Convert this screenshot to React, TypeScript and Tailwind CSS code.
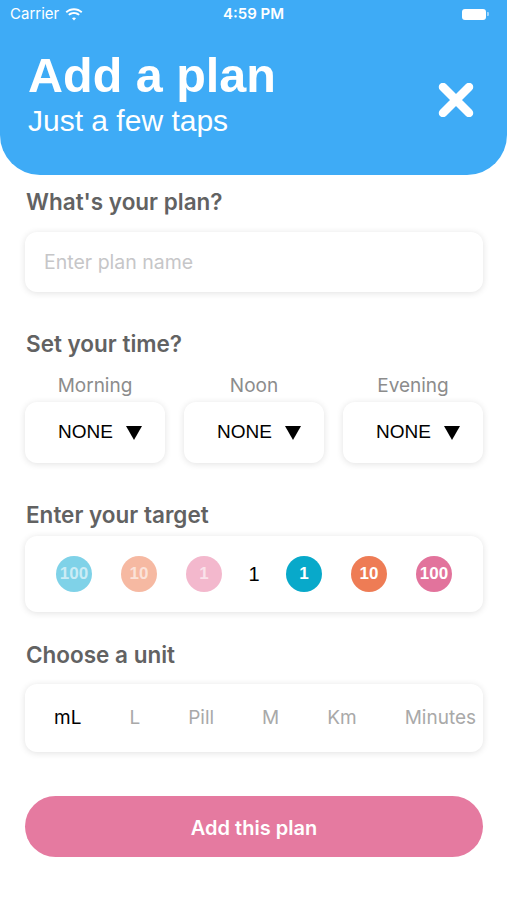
import React from "react";

const sf = { fontFamily: "Inter, 'Noto Sans', sans-serif" };
const hv = { fontFamily: "'Liberation Sans', Arial, sans-serif" };

function Wifi() {
  return (
    <svg width="18" height="13" viewBox="0 0 18 13" fill="white">
      <path d="M9 2.2c2.7 0 5.2 1 7.1 2.8l1.3-1.4C15.1 1.5 12.1.3 9 .3S2.9 1.5.6 3.6L1.9 5C3.8 3.2 6.3 2.2 9 2.2z" />
      <path d="M9 5.9c1.7 0 3.3.6 4.5 1.7l1.3-1.4C13.2 4.8 11.2 4 9 4S4.8 4.8 3.2 6.2l1.3 1.4C5.7 6.5 7.3 5.9 9 5.9z" />
      <path d="M9 9.4c.8 0 1.5.3 2 .8L9 12.4 7 10.2c.5-.5 1.2-.8 2-.8z" />
    </svg>
  );
}

function Circle({ n, bg }: { n: string; bg: string }) {
  return (
    <div
      className={`w-[36px] h-[36px] rounded-full flex items-center justify-center text-white font-bold text-[17px] ${bg}`}
      style={hv}
    >
      {n}
    </div>
  );
}

function Dropdown() {
  return (
    <div className="flex-1 h-[61px] bg-white rounded-[12px] shadow-[0_1px_7px_rgba(0,0,0,0.12)] flex items-center justify-center pl-[10px] gap-[13px]">
      <span className="text-[19px] text-black" style={hv}>NONE</span>
      <svg width="16" height="14" viewBox="0 0 16 14"><path d="M0 0H16L8 14Z" fill="black" /></svg>
    </div>
  );
}

export default function App() {
  const units = ["mL", "L", "Pill", "M", "Km", "Minutes"];
  return (
    <div className="w-[507px] h-[900px] bg-white relative overflow-hidden">
      <div className="h-[175px] bg-[#3eabf6] rounded-b-[40px] text-white flex flex-col">
        <div className="h-[28px] flex items-center px-[10px] relative">
          <div className="flex items-center gap-[6px]">
            <span className="text-[15px]" style={sf}>Carrier</span>
            <Wifi />
          </div>
          <span className="absolute left-0 right-0 text-center text-[15px] font-semibold" style={sf}>4:59 PM</span>
          <div className="ml-auto mr-[8px] flex items-center">
            <div className="w-[24px] h-[11px] rounded-[3px] bg-white" />
            <div className="w-[2px] h-[4px] rounded-r-[1px] bg-white/50 ml-[1px]" />
          </div>
        </div>
        <div className="flex items-center pl-[28px] pr-[33px] mt-[21px]">
          <div className="flex flex-col">
            <div className="text-[48.5px] font-bold leading-[52px]" style={hv}>Add a plan</div>
            <div className="text-[30px] leading-[36px] mt-[2px]" style={hv}>Just a few taps</div>
          </div>
          <svg className="ml-auto mt-[12px]" width="36" height="34" viewBox="0 0 36 34">
            <path d="M5 4L31 30M31 4L5 30" stroke="white" strokeWidth="8.5" strokeLinecap="round" />
          </svg>
        </div>
      </div>

      <div className="pl-[25px] pr-[24px] flex flex-col" style={sf}>
        <div className="mt-[13px] text-[22.5px] leading-[28px] font-semibold text-[#626262] pl-[1px]">What's your plan?</div>
        <div className="mt-[16px] h-[60px] bg-white rounded-[12px] shadow-[0_1px_7px_rgba(0,0,0,0.12)] flex items-center pl-[19px]">
          <span className="text-[19.5px] text-[#c6c6c8] mt-[2px]">Enter plan name</span>
        </div>

        <div className="mt-[38px] text-[22.5px] leading-[28px] font-semibold text-[#626262] pl-[1px]">Set your time?</div>
        <div className="mt-[15px] flex gap-[19px]">
          {["Morning", "Noon", "Evening"].map((t) => (
            <div key={t} className="flex-1 flex flex-col">
              <div className="text-center text-[19px] leading-[24px] text-[#8c8c8c] mt-[1px] mb-[-1px]">{t}</div>
              <div className="mt-[5px] flex">
                <Dropdown />
              </div>
            </div>
          ))}
        </div>

        <div className="mt-[38px] text-[22.5px] leading-[28px] font-semibold text-[#626262] pl-[1px]">Enter your target</div>
        <div className="mt-[7px] h-[76px] bg-white rounded-[12px] shadow-[0_1px_7px_rgba(0,0,0,0.12)] flex items-center justify-center gap-[29px]">
          <Circle n="100" bg="bg-[#7fd2e8] text-white/60" />
          <Circle n="10" bg="bg-[#f6b9a2] text-white/60" />
          <Circle n="1" bg="bg-[#f3b8cd] text-white/60" />
          <div className="w-[6px] flex justify-center">
            <span className="text-[20px] text-black" style={hv}>1</span>
          </div>
          <Circle n="1" bg="bg-[#08a9ca]" />
          <Circle n="10" bg="bg-[#ee7c55]" />
          <Circle n="100" bg="bg-[#e2739c]" />
        </div>

        <div className="mt-[29px] text-[22.5px] leading-[28px] font-semibold text-[#626262] pl-[1px]">Choose a unit</div>
        <div className="mt-[15px] h-[68px] bg-white rounded-[12px] shadow-[0_1px_7px_rgba(0,0,0,0.12)] flex items-center pl-[29px] gap-[48px]">
          {units.map((u, i) => (
            <span key={u} className={`text-[19px] ${i === 0 ? "text-black" : "text-[#a9a9a9]"}`}>{u}</span>
          ))}
        </div>

        <div className="mt-[44px] h-[61px] rounded-full bg-[#e57aa0] flex items-center justify-center">
          <span className="text-white text-[20px] font-semibold mt-[2px]">Add this plan</span>
        </div>
      </div>
    </div>
  );
}
